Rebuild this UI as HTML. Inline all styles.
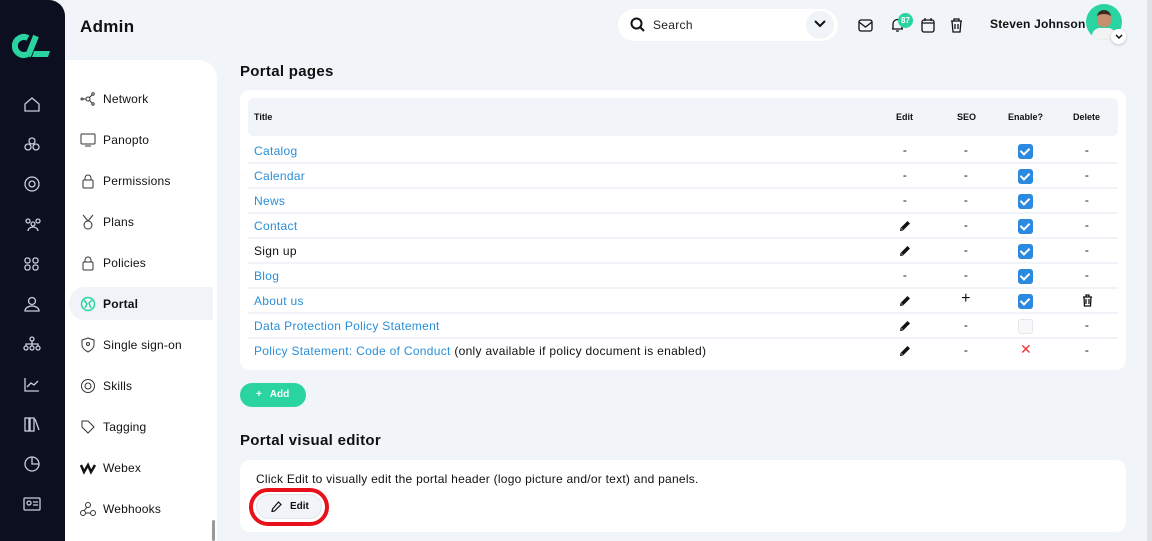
<!DOCTYPE html>
<html><head><meta charset="utf-8"><style>
*{margin:0;padding:0;box-sizing:border-box}
body{width:1152px;height:541px;overflow:hidden;background:#f1f4f8;font-family:"Liberation Sans",sans-serif;color:#111;position:relative}
.a{position:absolute}
.side{left:0;top:0;width:65px;height:541px;background:#0c0f1f;border-top-right-radius:16px}
.side svg{position:absolute;left:23px}
.sub{left:65px;top:60px;width:152px;height:481px;background:#fff;border-top-right-radius:18px}
.mi{position:absolute;left:80px;font-size:12px;color:#111;display:flex;align-items:center;gap:7px;height:20px;letter-spacing:.2px}
.mi svg{width:16px;height:16px}
.card{background:#fff;border-radius:10px}
.row{position:absolute;left:248px;width:870px;height:25px;border-bottom:2px solid #f0f3f8;font-size:12px;letter-spacing:.3px}
.row .t{position:absolute;left:6px;top:5px;color:#2a8fd8}
.c{position:absolute;top:4px;width:20px;text-align:center;font-size:12px}
.cb{position:absolute;top:5px;width:15px;height:15px;border-radius:3px;background:#2b8ae0}
.cb:after{content:"";position:absolute;left:4px;top:2px;width:4px;height:7px;border:solid #fff;border-width:0 2px 2px 0;transform:rotate(45deg)}
.pen{position:absolute;top:6px;left:651px}
h2{position:absolute;font-size:15px;font-weight:bold;letter-spacing:.3px}
</style></head><body>
<div class="a side">
 <svg style="left:12px;top:33px" width="40" height="26" viewBox="0 0 40 26"><path d="M16 5 A9 9 0 1 0 16 21" stroke="#2ad4a0" stroke-width="6" fill="none"/><path d="M16 23 L24 3" stroke="#2ad4a0" stroke-width="6"/><path d="M22 18H38L36 24H20Z" fill="#2ad4a0"/></svg>
 <svg style="top:96px" width="18" height="16" fill="none" stroke="#ccd" stroke-width="1.3"><path d="M2 8 L9 2 L16 8 V15 H2Z"/></svg>
 <svg style="top:136px" width="18" height="16" fill="none" stroke="#ccd" stroke-width="1.3"><circle cx="9" cy="5" r="3"/><circle cx="5" cy="11" r="3"/><circle cx="13" cy="11" r="3"/></svg>
 <svg style="top:176px" width="18" height="16" fill="none" stroke="#ccd" stroke-width="1.3"><circle cx="9" cy="8" r="7"/><circle cx="9" cy="8" r="3"/></svg>
 <svg style="top:216px" width="20" height="16" fill="none" stroke="#ccd" stroke-width="1.3"><circle cx="5" cy="5" r="2"/><circle cx="15" cy="5" r="2"/><circle cx="10" cy="8" r="2"/><path d="M5 15 a5 4 0 0 1 10 0"/></svg>
 <svg style="top:256px" width="18" height="16" fill="none" stroke="#ccd" stroke-width="1.3"><rect x="2" y="2" width="5" height="5" rx="2"/><rect x="10" y="2" width="5" height="5" rx="2"/><rect x="2" y="9" width="5" height="5" rx="2"/><rect x="10" y="9" width="5" height="5" rx="2"/></svg>
 <svg style="top:296px" width="18" height="16" fill="none" stroke="#ccd" stroke-width="1.3"><circle cx="9" cy="5" r="3.5"/><path d="M2 15 a7 5 0 0 1 14 0Z"/></svg>
 <svg style="top:336px" width="18" height="16" fill="none" stroke="#ccd" stroke-width="1.3"><circle cx="9" cy="3" r="2"/><circle cx="3" cy="12" r="2"/><circle cx="9" cy="12" r="2"/><circle cx="15" cy="12" r="2"/><path d="M9 5V10M3 10V8H15V10"/></svg>
 <svg style="top:376px" width="18" height="16" fill="none" stroke="#ccd" stroke-width="1.3"><path d="M2 2V15H16M4 11L8 7L11 9L15 5"/></svg>
 <svg style="top:416px" width="18" height="16" fill="none" stroke="#ccd" stroke-width="1.3"><rect x="2" y="2" width="4" height="13"/><rect x="7" y="2" width="4" height="13"/><path d="M12 3L16 14"/></svg>
 <svg style="top:456px" width="18" height="16" fill="none" stroke="#ccd" stroke-width="1.3"><circle cx="9" cy="8" r="7"/><path d="M9 1V8H16"/></svg>
 <svg style="top:496px" width="18" height="16" fill="none" stroke="#ccd" stroke-width="1.3"><rect x="1" y="2" width="16" height="12" rx="1"/><circle cx="6" cy="7" r="2"/><path d="M10 6H15M10 9H15"/></svg>
</div>
<div class="a" style="left:80px;top:17px;font-size:17px;font-weight:bold;letter-spacing:.3px">Admin</div>
<div class="a sub"></div>
<div class="a" style="left:69px;top:287px;width:144px;height:33px;background:#f0f3f8;border-radius:16px 0 0 16px"></div>
<div class="mi" style="top:89px"><svg viewBox="0 0 16 16" fill="none" stroke="#333"><circle cx="8" cy="8" r="2"/><circle cx="2" cy="8" r="1"/><circle cx="13" cy="3" r="1.2"/><circle cx="13" cy="13" r="1.2"/><path d="M3 8H6M9.5 6.5L12 4M9.5 9.5L12 12"/></svg>Network</div>
<div class="mi" style="top:130px"><svg viewBox="0 0 16 16" fill="none" stroke="#333"><rect x="1" y="2" width="14" height="10" rx="1"/><path d="M5 14H11"/></svg>Panopto</div>
<div class="mi" style="top:171px"><svg viewBox="0 0 16 16" fill="none" stroke="#333"><rect x="3" y="7" width="10" height="8" rx="1"/><path d="M5 7V5a3 3 0 0 1 6 0V7"/></svg>Permissions</div>
<div class="mi" style="top:212px"><svg viewBox="0 0 16 16" fill="none" stroke="#333"><path d="M3 1L8 7L13 1"/><circle cx="8" cy="11" r="4"/></svg>Plans</div>
<div class="mi" style="top:253px"><svg viewBox="0 0 16 16" fill="none" stroke="#333"><rect x="3" y="7" width="10" height="8" rx="1"/><path d="M5 7V5a3 3 0 0 1 6 0V7"/></svg>Policies</div>
<div class="mi" style="top:294px;font-weight:bold"><svg viewBox="0 0 16 16" fill="none" stroke="#2ad4a0" stroke-width="1.5"><circle cx="8" cy="8" r="6.5"/><path d="M4 4L7 8L5 12M12 4L9 7L11 12"/></svg>Portal</div>
<div class="mi" style="top:335px"><svg viewBox="0 0 16 16" fill="none" stroke="#333"><path d="M8 1L14 3V8C14 12 8 15 8 15C8 15 2 12 2 8V3Z"/><circle cx="8" cy="7" r="1.5"/></svg>Single sign-on</div>
<div class="mi" style="top:376px"><svg viewBox="0 0 16 16" fill="none" stroke="#333"><circle cx="8" cy="8" r="6.5"/><circle cx="8" cy="8" r="3"/></svg>Skills</div>
<div class="mi" style="top:417px"><svg viewBox="0 0 16 16" fill="none" stroke="#333"><path d="M2 2H8L14 8L8 14L2 8Z"/></svg>Tagging</div>
<div class="mi" style="top:458px"><svg viewBox="0 0 16 16" fill="none" stroke="#111" stroke-width="2.5"><path d="M1 5L4 12L8 5L11 12L15 5"/></svg>Webex</div>
<div class="mi" style="top:499px"><svg viewBox="0 0 16 16" fill="none" stroke="#333"><circle cx="8" cy="4" r="2.5"/><circle cx="3" cy="12" r="2.5"/><circle cx="13" cy="12" r="2.5"/><path d="M7 6L4 10M6 12H10"/></svg>Webhooks</div>
<div class="a" style="left:212px;top:520px;width:3px;height:21px;background:#999;border-radius:2px"></div>
<div class="a" style="left:1147px;top:0;width:5px;height:541px;background:#e0e2e6"></div>

<div class="a" style="left:618px;top:9px;width:220px;height:32px;background:#fff;border-radius:16px"></div>
<svg class="a" style="left:630px;top:17px" width="16" height="16" fill="none" stroke="#111" stroke-width="2"><circle cx="6.5" cy="6.5" r="5"/><path d="M10 10L14 14"/></svg>
<div class="a" style="left:653px;top:18px;font-size:12px;color:#222;letter-spacing:.3px">Search</div>
<div class="a" style="left:806px;top:11px;width:28px;height:28px;background:#f0f3f8;border-radius:50%"></div>
<svg class="a" style="left:814px;top:19px" width="12" height="10" fill="none" stroke="#111" stroke-width="2"><path d="M1 2L6 7L11 2"/></svg>
<svg class="a" style="left:858px;top:19px" width="15" height="13" fill="none" stroke="#111" stroke-width="1.3"><rect x="1" y="1" width="13" height="11" rx="2"/><path d="M1 3L7.5 8L14 3"/></svg>
<svg class="a" style="left:890px;top:17px" width="15" height="16" fill="none" stroke="#111" stroke-width="1.3"><path d="M3 12V7a4.5 4.5 0 0 1 9 0V12H2M13 12H12M6 14H9"/></svg>
<div class="a" style="left:898px;top:13px;width:15px;height:15px;background:#2ad4a0;border-radius:50%;color:#fff;font-size:8px;font-weight:bold;text-align:center;line-height:15px">87</div>
<svg class="a" style="left:921px;top:18px" width="14" height="15" fill="none" stroke="#111" stroke-width="1.3"><rect x="1" y="2" width="12" height="12" rx="2"/><path d="M1 5H13M4 0V3M10 0V3"/></svg>
<svg class="a" style="left:950px;top:18px" width="13" height="15" fill="none" stroke="#111" stroke-width="1.3"><path d="M1 3H12M4 3V1H9V3M2 3L3 14H10L11 3M5 6V11M8 6V11"/></svg>
<div class="a" style="left:990px;top:17px;font-size:12px;font-weight:bold;letter-spacing:.2px">Steven Johnson</div>
<div class="a" style="left:1086px;top:4px;width:36px;height:36px;background:#2ad4a0;border-radius:50%;overflow:hidden"><div style="position:absolute;left:11px;top:6px;width:14px;height:17px;background:#c78f6e;border-radius:7px 7px 6px 6px;border-top:4px solid #3a2a20"></div><div style="position:absolute;left:6px;top:24px;width:24px;height:14px;background:#f3f3f3;border-radius:8px 8px 0 0"></div></div>
<div class="a" style="left:1111px;top:29px;width:15px;height:15px;background:#fff;border-radius:50%;box-shadow:0 1px 3px rgba(0,0,0,.2)"></div>
<svg class="a" style="left:1115px;top:34px" width="8" height="6" fill="none" stroke="#111" stroke-width="1.5"><path d="M1 1L4 4L7 1"/></svg>

<h2 style="left:240px;top:63px">Portal pages</h2>
<div class="a card" style="left:240px;top:90px;width:886px;height:280px"></div>
<div class="a" style="left:248px;top:98px;width:870px;height:38px;background:#f1f4f8;border-radius:6px;font-size:9px;font-weight:bold">
 <span class="a" style="left:6px;top:14px">Title</span>
 <span class="a" style="left:648px;top:14px">Edit</span>
 <span class="a" style="left:709px;top:14px">SEO</span>
 <span class="a" style="left:760px;top:14px">Enable?</span>
 <span class="a" style="left:825px;top:14px">Delete</span>
</div>
<svg width="0" height="0" style="position:absolute"><defs><symbol id="pn" viewBox="0 0 12 12"><path d="M8.5 1L11 3.5L4 10.5L1 11L1.5 8Z" fill="#111"/><path d="M2.5 8.5L3.5 9.5" stroke="#fff" stroke-width=".8"/></symbol></defs></svg>
<div class="row" style="top:139px"><span class="t">Catalog</span><span class="c" style="left:647px">-</span><span class="c" style="left:708px">-</span><span class="cb" style="left:770px"></span><span class="c" style="left:829px">-</span></div>
<div class="row" style="top:164px"><span class="t">Calendar</span><span class="c" style="left:647px">-</span><span class="c" style="left:708px">-</span><span class="cb" style="left:770px"></span><span class="c" style="left:829px">-</span></div>
<div class="row" style="top:189px"><span class="t">News</span><span class="c" style="left:647px">-</span><span class="c" style="left:708px">-</span><span class="cb" style="left:770px"></span><span class="c" style="left:829px">-</span></div>
<div class="row" style="top:214px"><span class="t">Contact</span><svg class="pen" width="12" height="12"><use href="#pn"/></svg><span class="c" style="left:708px">-</span><span class="cb" style="left:770px"></span><span class="c" style="left:829px">-</span></div>
<div class="row" style="top:239px"><span class="t" style="color:#111">Sign up</span><svg class="pen" width="12" height="12"><use href="#pn"/></svg><span class="c" style="left:708px">-</span><span class="cb" style="left:770px"></span><span class="c" style="left:829px">-</span></div>
<div class="row" style="top:264px"><span class="t">Blog</span><span class="c" style="left:647px">-</span><span class="c" style="left:708px">-</span><span class="cb" style="left:770px"></span><span class="c" style="left:829px">-</span></div>
<div class="row" style="top:289px"><span class="t">About us</span><svg class="pen" width="12" height="12"><use href="#pn"/></svg><span class="c" style="left:708px;font-size:16px;top:1px">+</span><span class="cb" style="left:770px"></span><svg class="a" style="left:834px;top:5px" width="11" height="13" fill="none" stroke="#111" stroke-width="1.3"><path d="M1 3H10M4 3V1H7V3M2 3L2.5 12H8.5L9 3M4 5V10M7 5V10"/></svg></div>
<div class="row" style="top:314px"><span class="t">Data Protection Policy Statement</span><svg class="pen" width="12" height="12"><use href="#pn"/></svg><span class="c" style="left:708px">-</span><span class="a" style="left:770px;top:5px;width:15px;height:15px;border:1px solid #e3e6ea;border-radius:3px;background:#f7f8fa"></span><span class="c" style="left:829px">-</span></div>
<div class="row" style="top:339px;border:none"><span class="t">Policy Statement: Code of Conduct <span style="color:#111">(only available if policy document is enabled)</span></span><svg class="pen" width="12" height="12"><use href="#pn"/></svg><span class="c" style="left:708px">-</span><span class="c" style="left:768px;color:#e33;font-size:14px;top:2px">✕</span><span class="c" style="left:829px">-</span></div>

<div class="a" style="left:240px;top:383px;width:66px;height:24px;background:#2ad4a0;border-radius:12px;color:#fff;font-size:10px;font-weight:bold;line-height:24px;padding-left:16px">+&nbsp;&nbsp; Add</div>
<h2 style="left:240px;top:432px">Portal visual editor</h2>
<div class="a card" style="left:240px;top:460px;width:886px;height:72px"></div>
<div class="a" style="left:256px;top:472px;font-size:12px;letter-spacing:.25px">Click Edit to visually edit the portal header (logo picture and/or text) and panels.</div>
<div class="a" style="left:249px;top:488px;width:80px;height:38px;border:4px solid #e8101a;border-radius:19px"></div>
<div class="a" style="left:256px;top:494px;width:66px;height:25px;background:#f1f4f8;border:1px solid #e3e6ea;border-radius:13px;font-size:10px;font-weight:bold;line-height:23px;padding-left:33px">Edit</div>
<svg class="a" style="left:271px;top:501px" width="11" height="11" fill="none" stroke="#111" stroke-width="1.2"><path d="M7.5 1L10 3.5L3.5 10L1 10.5L1.5 8Z"/></svg>
</body></html>
